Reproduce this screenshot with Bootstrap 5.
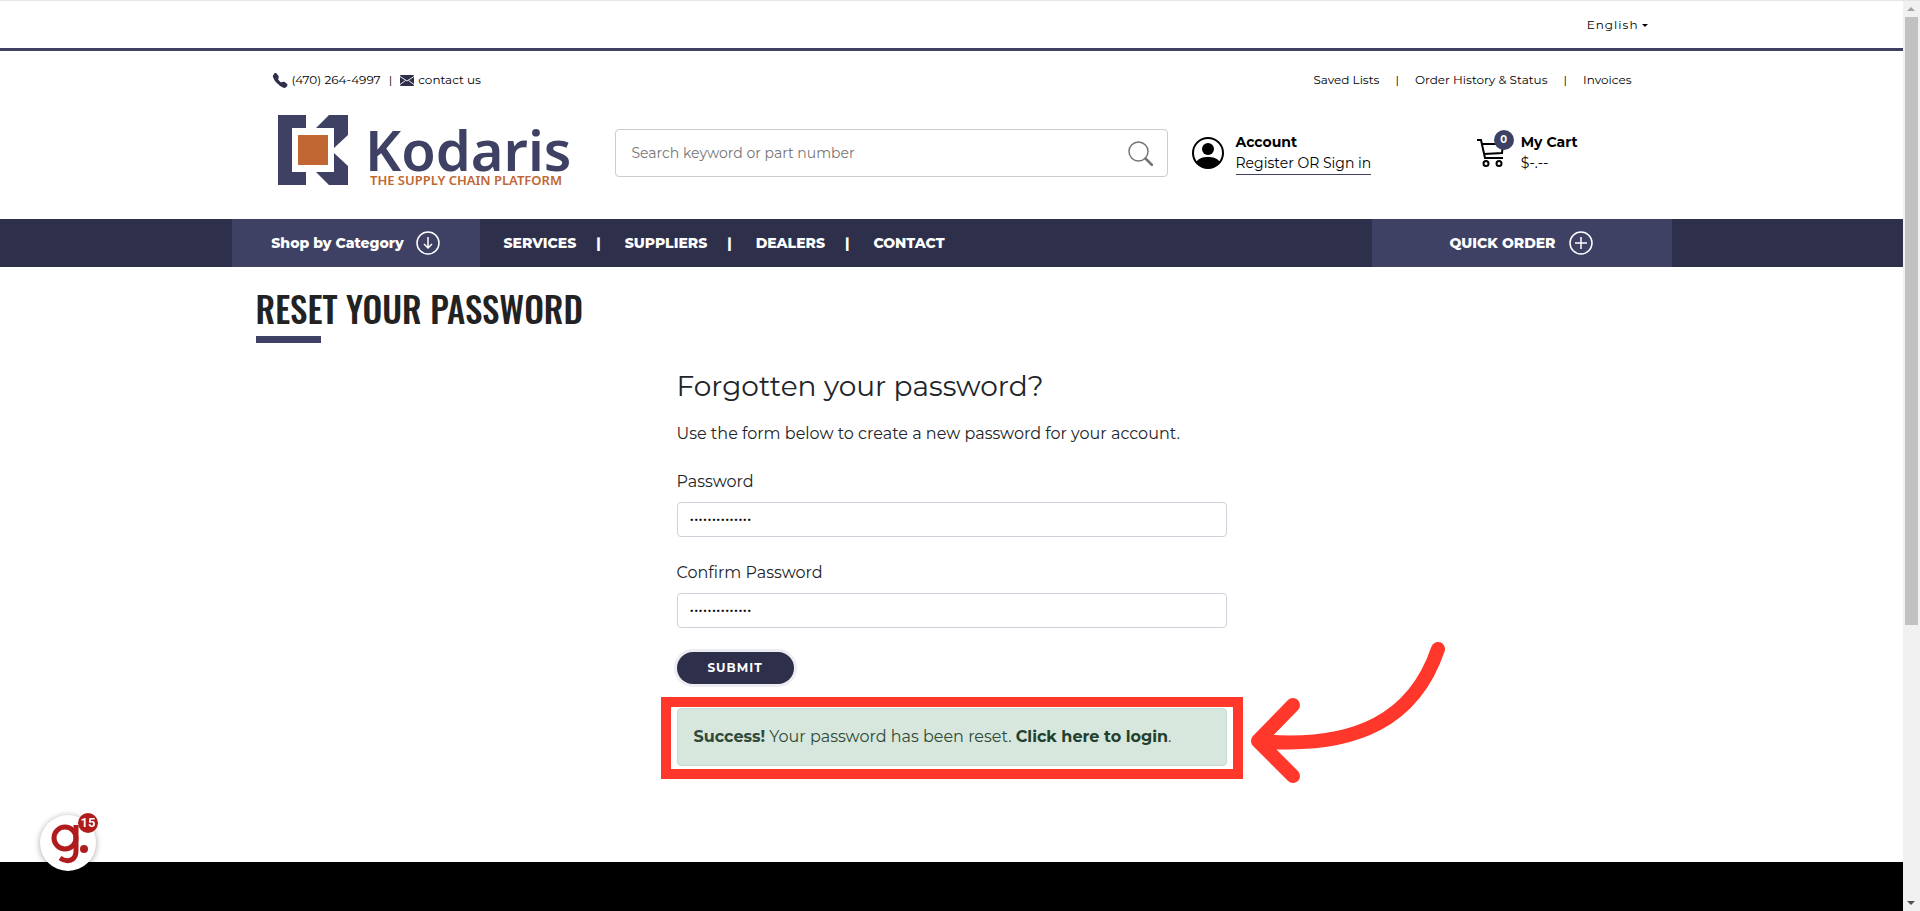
<!DOCTYPE html>
<html lang="en">
<head>
<meta charset="utf-8">
<meta name="viewport" content="width=device-width, initial-scale=1">
<title>Reset your password - Kodaris</title>
<link href="https://cdn.jsdelivr.net/npm/bootstrap@5.3.0/dist/css/bootstrap.min.css" rel="stylesheet">
<style>
:root { --navy: #2d2f4b; --indigo: #3f4164; --rust: #c06733; --alarm: #ff382b; --scrollbar: 17px; }
body { font-family: Montserrat, Inter, "Open Sans", sans-serif; font-size: 16px; line-height: 24px; font-weight: 450; color: #212529; background: #fff; }
a { color: #000; text-decoration: none; }
.page { min-height: 100vh; padding-right: var(--scrollbar); }
.shell { width: 100%; max-width: 1440px; margin: 0 auto; }
.topbar { height: 51px; border-top: 1px solid #e5e5e5; border-bottom: 3px solid var(--indigo); }
.topbar .shell { padding-right: 24px; }
.lang { font-size: 12px; line-height: 16px; font-weight: 450; letter-spacing: 1px; color: #000; border: 0; background: none; padding: 0; }
.lang::after { margin-left: 3px; vertical-align: 2px; border-width: 3px 3px 0; }
.masthead { height: 168px; padding: 0 40px; }
.links { font-size: 12px; line-height: 16px; color: #000; padding-top: 21px; }
.brandrow { padding-top: 26px; }
.brand-text { font-family: "Noto Sans", sans-serif; font-weight: 600; }
.search { width: 553px; height: 48px; border: 1px solid #ccc; border-radius: 4px; padding: 0 14px 0 16px; margin-left: 45px; }
.search input { border: 0; outline: 0; font-size: 14px; font-weight: 450; color: #000; background: none; }
.search input::placeholder { color: #757575; opacity: 1; }
.search button { border: 0; background: none; padding: 0; line-height: 0; }
.tool { font-size: 14px; line-height: 21px; color: #000; }
.cart { margin-right: 54px; }
.signin { border-bottom: 1px solid var(--indigo); }
.count { position: absolute; top: -9px; right: -9px; width: 20px; height: 20px; border-radius: 50%; background: var(--indigo); color: #fff; font-size: 10px; line-height: 20px; font-weight: 700; text-align: center; }
.mainnav { background: var(--navy); font-size: 14px; font-weight: 800; }
.mainnav a, .mainnav button { color: #fff; font-weight: 800; }
.mainnav .shell { height: 48px; }
.menu { padding-left: 24px; }
.menu span { color: #fff; margin: 0 24px 0 20px; }
.block-btn { border: 0; background: var(--indigo); gap: 12px; }
.shop { width: 248px; }
.quick { width: 300px; gap: 14px; }
.title { font-family: Oswald, "Liberation Sans Narrow", "DejaVu Sans Condensed", sans-serif; font-size: 35px; line-height: 48px; font-weight: 500; color: #222; margin: 0; padding-top: 17px; }
.title-rule { width: 65px; height: 7px; background: var(--indigo); margin-top: 4px; }
.reset { width: 100%; max-width: 550px; margin: 25px auto 0; }
.reset h2 { font-size: 28px; line-height: 36px; font-weight: 450; margin: 0 0 18px; }
.reset p { margin: 0 0 24px; }
.reset label { display: block; margin-bottom: 8px; }
.reset .form-control { height: 35px; border-color: #ced0da; border-radius: 4px; padding: 0 12px 2px; font-size: 15px; margin-bottom: 24px; color: #000; }
.submit { display: block; width: 117px; height: 32px; border: 0; border-radius: 16px; background: var(--navy); color: #fff; font-size: 12px; font-weight: 700; letter-spacing: 1px; box-shadow: 0 0 0 3px #ecedf2; }
.callout { position: relative; border: 10px solid var(--alarm); margin: 13px -16px 0; padding: 1px 6px 3px; }
.callout .alert { margin: 0; padding: 16px; border: 1px solid #c3dccf; border-radius: 4px; background: #d7e7dd; color: #2f4a38; }
.callout .alert a { color: #23402d; font-weight: 700; }
.callout .alert b { font-weight: 700; }
.pointer { position: absolute; left: 100%; top: -65px; margin-left: 17px; }
.foot { background: #000; margin-top: 83px; min-height: 49px; }
.bubble { position: fixed; left: 40px; bottom: 40px; width: 56px; height: 56px; border: 0; border-radius: 50%; background: #fff; padding: 0; box-shadow: 0 1px 6px rgba(0,0,0,.35); }
.bubble span { position: absolute; right: -2px; top: -2px; width: 20px; height: 20px; border-radius: 50%; background: #b01c1c; color: #fff; font: 700 13px/20px Roboto, sans-serif; }
.bar { position: fixed; top: 0; right: 0; bottom: 0; width: var(--scrollbar); background: #f1f1f1; border-top: 1px solid #e5e5e5; }
.thumb { width: 13px; height: 608px; max-height: 67vh; background: #c1c1c1; }
</style>
</head>
<body>
<div class="page d-flex flex-column">
  <div class="topbar">
    <div class="shell d-flex justify-content-end align-items-center h-100">
      <button class="lang dropdown-toggle" type="button">English</button>
    </div>
  </div>
  <header class="shell masthead">
    <div class="links d-flex justify-content-between">
      <div class="d-flex align-items-center">
        <svg class="me-1" width="16" height="15" viewBox="0 0 16 16" fill="#2d2f4b" aria-hidden="true"><path d="M1.900.5a1.700 1.700 0 0 1 2.600.2l1.800 2.300c.3.4.4 1 .3 1.500l-.5 2.200c-.1.2 0 .4.1.6l2.500 2.500c.2.2.4.2.6.1l2.200-.5c.5-.1 1.100 0 1.500.3l2.300 1.800c.8.600.9 1.800.2 2.600l-1 1c-.8.700-1.900 1.100-2.900.7A18 18 0 0 1 4.900 11 18 18 0 0 1 .6 4.400c-.4-1-.1-2.200.7-2.900z"/></svg>
        <a href="#">(470) 264-4997</a><span class="mx-2">|</span>
        <svg class="me-1" width="14" height="11" viewBox="0 0 14 11" aria-hidden="true"><rect width="14" height="11" rx="1" fill="#2d2f4b"/><path d="M0 1.500l7 4.500 7-4.500M0 9.500L5.500 5.500M14 9.500L8.500 5.500" fill="none" stroke="#fff" stroke-width=".9"/></svg>
        <a href="#">contact us</a>
      </div>
      <nav class="d-flex gap-3" aria-label="Account links">
        <a href="#">Saved Lists</a><span>|</span><a href="#">Order History &amp; Status</a><span>|</span><a href="#">Invoices</a>
      </nav>
    </div>
    <div class="brandrow d-flex align-items-center">
      <a class="d-block lh-1" href="#" aria-label="Kodaris">
        <svg width="298" height="78" viewBox="0 0 298 78" class="d-block overflow-visible">
          <g fill="#3f4164"><path d="M6 1h28v13H20v44h14v13H6z"/><path d="M57 1h19v20L62 34V14H44z"/><path d="M62 39l14 13v19H57L44 58h18z"/></g>
          <path d="M26 21h30v30H26z" fill="#c06733"/>
          <text class="brand-text" x="93" y="57" font-size="56" fill="#3f4164">Kodaris</text>
          <text class="brand-text" x="98" y="71" font-size="13" fill="#c06733">THE SUPPLY CHAIN PLATFORM</text>
        </svg>
      </a>
      <form class="search d-flex align-items-center">
        <input class="flex-grow-1 p-0" type="search" placeholder="Search keyword or part number" aria-label="Search">
        <button type="button" aria-label="Search"><svg width="25" height="25" viewBox="0 0 25 25" fill="none" stroke="#757575"><circle cx="10.500" cy="10.500" r="9.500" stroke-width="1.500"/><path d="M17.500 17.500L24 24" stroke-width="2.500" stroke-linecap="round"/></svg></button>
      </form>
      <div class="tool d-flex align-items-center ms-4">
        <svg width="32" height="32" viewBox="0 0 32 32" aria-hidden="true"><circle cx="16" cy="16" r="15" fill="none" stroke="#000" stroke-width="2"/><circle cx="16" cy="12" r="6" fill="#000"/><path d="M4 25c3-4 7-5 12-5s9 1 12 5c-3 4-7 6-12 6S7 29 4 25z"/></svg>
        <div class="ms-2 ps-1"><div class="fw-bold">Account</div><a class="signin d-block" href="#">Register OR Sign in</a></div>
      </div>
      <a class="tool d-flex align-items-center ms-auto cart" href="#">
        <span class="position-relative lh-1">
          <svg width="28" height="28" viewBox="0 0 28 28" fill="none" stroke="#000" stroke-width="2" aria-hidden="true"><path d="M0 1h4l4 18h18M5 5h21l-1 9-18 1"/><circle cx="9" cy="24.500" r="2.500"/><circle cx="22" cy="24.500" r="2.500"/></svg>
          <span class="count">0</span>
        </span>
        <span class="ms-3"><span class="d-block fw-bold">My Cart</span>$-.--</span>
      </a>
    </div>
  </header>
  <nav class="mainnav" aria-label="Main">
    <div class="shell d-flex">
      <button class="block-btn shop d-flex align-items-center justify-content-center" type="button">Shop by Category
        <svg width="24" height="24" viewBox="0 0 24 24" fill="none" stroke="#fff" stroke-width="1.500" aria-hidden="true"><circle cx="12" cy="12" r="11"/><path d="M12 6v11M8 13l4 4 4-4"/></svg></button>
      <div class="menu d-flex align-items-center">
        <a href="#">SERVICES</a><span>|</span><a href="#">SUPPLIERS</a><span>|</span><a href="#">DEALERS</a><span>|</span><a href="#">CONTACT</a>
      </div>
      <button class="block-btn quick d-flex align-items-center justify-content-center ms-auto" type="button">QUICK ORDER
        <svg width="24" height="24" viewBox="0 0 24 24" fill="none" stroke="#fff" stroke-width="1.500" aria-hidden="true"><circle cx="12" cy="12" r="11"/><path d="M12 6v12M6 12h12"/></svg></button>
    </div>
  </nav>
  <main class="shell px-4">
    <h1 class="title">RESET YOUR PASSWORD</h1>
    <div class="title-rule"></div>
    <form class="reset">
      <h2>Forgotten your password?</h2>
      <p>Use the form below to create a new password for your account.</p>
      <label for="pw">Password</label>
      <input class="form-control" id="pw" type="password" value="abcdefghijklmn">
      <label for="pw2">Confirm Password</label>
      <input class="form-control" id="pw2" type="password" value="abcdefghijklmn">
      <button class="submit" type="button">SUBMIT</button>
      <div class="callout">
        <div class="alert" role="alert"><b>Success!</b> Your password has been reset. <a href="#">Click here to login</a>.</div>
        <svg class="pointer" width="195" height="142" viewBox="0 0 195 142" fill="none" stroke="#ff382b" stroke-width="14" stroke-linecap="round" stroke-linejoin="round" aria-hidden="true"><path d="M188 7C165 75 109 108 8 99M43 63L8 99l35 35"/></svg>
      </div>
    </form>
  </main>
  <footer class="foot flex-grow-1"></footer>
</div>
<button class="bubble" type="button" aria-label="Help">
  <svg width="56" height="56" viewBox="0 0 56 56" fill="none" stroke="#b01c1c" stroke-width="5" aria-hidden="true"><circle cx="25" cy="23" r="11"/><path d="M36 10v26c0 10-9 12-16 7"/><circle cx="44" cy="34" r="4" fill="#b01c1c" stroke="none"/></svg>
  <span>15</span>
</button>
<div class="bar d-flex flex-column align-items-center justify-content-between" aria-hidden="true">
  <div><svg class="d-block mx-auto" width="13" height="16" viewBox="0 0 13 16"><path d="M2 10l4-4 4 4z" fill="#a3a3a3"/></svg><div class="thumb"></div></div>
  <svg width="13" height="16" viewBox="0 0 13 16"><path d="M2 6h8l-4 4z" fill="#505050"/></svg>
</div>
<script src="https://cdn.jsdelivr.net/npm/bootstrap@5.3.0/dist/js/bootstrap.bundle.min.js"></script>
</body>
</html>
